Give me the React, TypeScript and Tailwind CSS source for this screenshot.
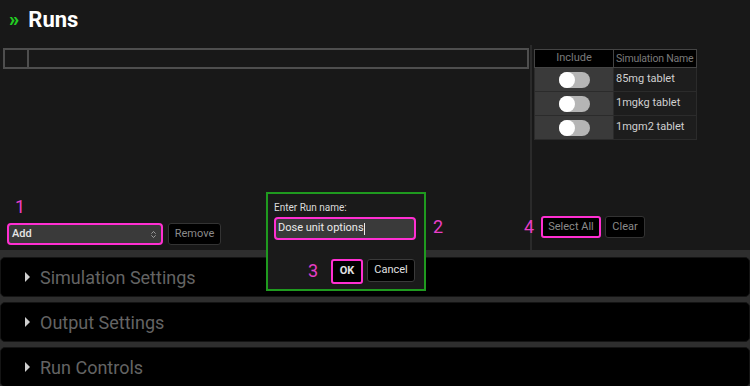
import { ChevronsUpDown } from "lucide-react";

const runs = ["85mg tablet", "1mgkg tablet", "1mgm2 tablet"];
const sections = ["Simulation Settings", "Output Settings", "Run Controls"];

function Toggle() {
  return (
    <div className="w-[31px] h-[16px] rounded-full bg-[#b5b5b5] relative">
      <div className="absolute left-0 top-0 w-[16px] h-[16px] rounded-full bg-white" />
    </div>
  );
}

export default function App() {
  return (
    <div className="relative w-[750px] h-[386px] overflow-hidden bg-[#181818] font-['Roboto','Liberation_Sans',sans-serif]">
      {/* Header */}
      <header className="h-[40px] flex items-center pl-[9px] gap-[9px]">
        <span className="text-[#22cc22] font-black text-[20px] leading-none -mt-[2px]">»</span>
        <h1 className="text-white font-bold text-[22px] leading-none">Runs</h1>
      </header>

      {/* Main */}
      <div className="flex h-[210px]">
        <div className="w-[530px] flex flex-col pl-[3px] pr-[1px]">
          <div className="mt-[8px] h-[21px] border-2 border-[#4e4e4e] flex">
            <div className="w-[24px] border-r-2 border-[#4e4e4e]" />
          </div>
          <div className="flex-1" />
          <div className="flex items-center gap-[5px] mb-[5px] pl-[4px]">
            <div className="w-[156px] h-[22px] rounded-[4px] border-2 border-[#ff2fd2] bg-[#3a3a3a] flex items-center justify-between px-[3px]">
              <span className="text-[11px] font-medium text-[#e6e6e6]">Add</span>
              <ChevronsUpDown size={9} className="text-[#bbb]" />
            </div>
            <button className="h-[22px] w-[53px] rounded-[3px] border border-[#333] bg-black text-[11px] text-[#8a8a8a]">Remove</button>
          </div>
        </div>
        <div className="w-[2px] mt-[5px] bg-[#2a2a2a]" />
        <div className="flex-1 flex flex-col pl-[2px]">
          <table className="mt-[9px] w-[163px] table-fixed border-collapse text-[11px] whitespace-nowrap">
            <thead>
              <tr className="bg-black h-[18px]">
                <th className="w-[79px] border border-[#444] font-normal text-[#7a7a7a]">Include</th>
                <th className="border border-[#444] font-normal text-[#7a7a7a] text-[10.5px] tracking-[-0.2px] text-left pl-[2px] overflow-hidden">Simulation Name</th>
              </tr>
            </thead>
            <tbody>
              {runs.map((r) => (
                <tr key={r} className="h-[24px]">
                  <td className="bg-[#3a3a3a] border border-[#2b2b2b]">
                    <div className="flex justify-center">
                      <Toggle />
                    </div>
                  </td>
                  <td className="bg-[#1d1d1d] border border-[#2b2b2b] text-[#d0d0d0] pl-[2px]">{r}</td>
                </tr>
              ))}
            </tbody>
          </table>
          <div className="flex-1" />
          <div className="flex items-center gap-[4px] mb-[12px] pl-[7px]">
            <button className="h-[22px] w-[60px] rounded-[3px] border-2 border-[#ff2fd2] bg-black text-[11px] text-[#8a8a8a]">Select All</button>
            <button className="h-[22px] w-[40px] rounded-[3px] border border-[#333] bg-black text-[11px] text-[#8a8a8a]">Clear</button>
          </div>
        </div>
      </div>

      {/* Accordion sections */}
      <div className="bg-[#2e2e2e] pt-[7px] flex flex-col gap-[5px]">
        {sections.map((s) => (
          <div key={s} className="h-[40px] bg-black rounded-[5px] border border-[#141414] flex items-center pl-[24px] gap-[10px]">
            <span className="w-0 h-0 border-y-[5px] border-y-transparent border-l-[5px] border-l-[#cfcfcf]" />
            <span className="text-[18px] text-[#646464]">{s}</span>
          </div>
        ))}
      </div>

      {/* Run name dialog */}
      <div className="absolute left-[266px] top-[192px] w-[160px] h-[99px] border-2 border-[#1f9a1f] bg-[#1a1a1a] px-[6px] pt-[8px]">
        <div className="text-[10px] text-[#dcdcdc] leading-[12px]">Enter Run name:</div>
        <div className="mt-[3px] w-[142px] h-[23px] rounded-[4px] border-2 border-[#ff2fd2] bg-[#3a3a3a] flex items-center px-[2px]">
          <span className="text-[11px] text-[#eaeaea]">Dose unit options</span>
          <span className="w-px h-[12px] bg-[#eaeaea]" />
        </div>
        <div className="mt-[19px] flex justify-end gap-[4px] pr-[3px]">
          <button className="h-[25px] w-[32px] rounded-[3px] border-2 border-[#ff2fd2] bg-black text-[11px] font-bold text-[#e0e0e0]">OK</button>
          <button className="h-[23px] w-[48px] rounded-[3px] border border-[#3a3a3a] bg-black text-[11px] text-[#e0e0e0]">Cancel</button>
        </div>
      </div>

      {/* Annotation numbers */}
      <span className="absolute left-[15px] top-[198px] text-[18px] text-[#e83ec8] leading-none">1</span>
      <span className="absolute left-[433px] top-[218px] text-[18px] text-[#e83ec8] leading-none">2</span>
      <span className="absolute left-[308px] top-[262px] text-[18px] text-[#e83ec8] leading-none">3</span>
      <span className="absolute left-[524px] top-[218px] text-[18px] text-[#e83ec8] leading-none">4</span>
    </div>
  );
}
